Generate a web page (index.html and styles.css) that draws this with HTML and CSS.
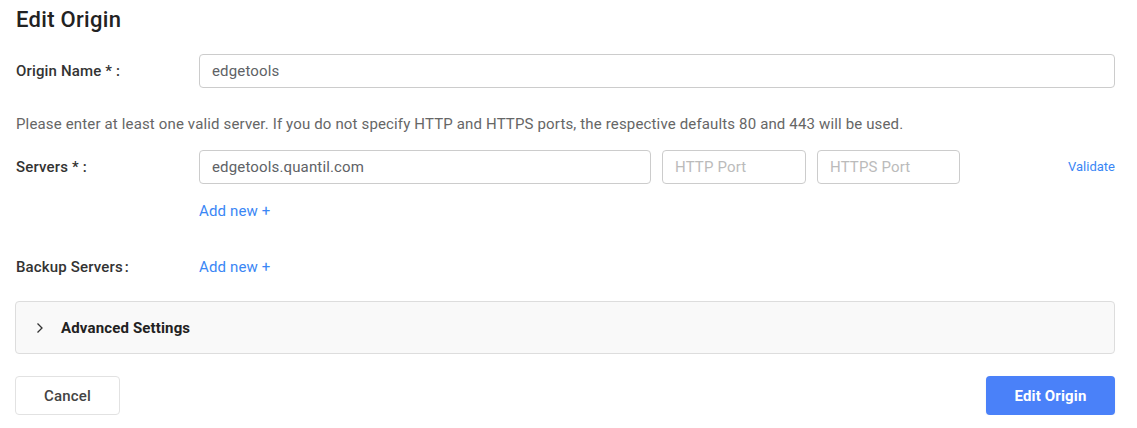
FILE: index.html
```html
<!DOCTYPE html>
<html>
<head>
<meta charset="utf-8">
<link rel="stylesheet" href="styles.css">
</head>
<body>
<div class="page">
  <h1 class="title">Edit Origin</h1>
  <div class="row row-name">
    <label class="label">Origin Name *<span class="colon">:</span></label>
    <div class="field"><div class="input">edgetools</div></div>
  </div>
  <p class="hint">Please enter at least one valid server. If you do not specify HTTP and HTTPS ports, the respective defaults 80 and 443 will be used.</p>
  <div class="row row-servers">
    <label class="label">Servers *<span class="colon">:</span></label>
    <div class="field">
      <div class="server-line">
        <div class="input host">edgetools.quantil.com</div>
        <div class="input port placeholder">HTTP Port</div>
        <div class="input port placeholder">HTTPS Port</div>
        <a class="validate">Validate</a>
      </div>
      <a class="add">Add new +</a>
    </div>
  </div>
  <div class="row row-backup">
    <label class="label">Backup Servers<span class="colon">:</span></label>
    <div class="field"><a class="add">Add new +</a></div>
  </div>
  <div class="panel">
    <svg class="chev" width="8" height="12" viewBox="0 0 8 12"><path d="M1.5 1.5 L6 6 L1.5 10.5" fill="none" stroke="#333" stroke-width="1.3"/></svg>
    <span class="panel-title">Advanced Settings</span>
  </div>
  <div class="actions">
    <button class="btn cancel">Cancel</button>
    <button class="btn primary">Edit Origin</button>
  </div>
</div>
</body>
</html>
```
FILE: styles.css
```css
* { box-sizing: border-box; }
body { margin: 0; background: #fff; font-family: Roboto, "Liberation Sans", sans-serif; color: #333; letter-spacing: 0.15px; }
.page { padding: 0 22px 0 15px; }
.title { margin: 0; padding: 7px 0 0 1px; font-size: 22px; font-weight: 500; line-height: 26px; color: #222; letter-spacing: 0.3px; }
.row { display: flex; align-items: flex-start; }
.label { width: 184px; flex: none; padding-left: 1px; font-size: 15px; font-weight: 500; line-height: 34px; color: #333; }
.colon { margin-left: 4px; }
.field { flex: 1; min-width: 0; }
.row-name { margin-top: 21px; }
.input { height: 34px; border: 1px solid #ccc; border-radius: 4px; padding: 0 12px; font-size: 15px; line-height: 32px; color: #606266; background: #fff; }
.placeholder { color: #bbb; }
.hint { margin: 20px 0 0 1px; font-size: 15px; line-height: 32px; color: #666; }
.row-servers { margin-top: 10px; }
.server-line { display: flex; align-items: center; }
.host { width: 452px; }
.port { width: 144px; margin-left: 11px; }
.port + .port { margin-left: 11px; width: 143px; }
.validate { margin-left: auto; font-size: 13px; color: #3a86f5; line-height: 34px; letter-spacing: 0; }
.add { display: block; font-size: 15px; color: #3a86f5; line-height: 20px; margin-top: 17px; }
.row-backup { margin-top: 36px; }
.row-backup .label { line-height: 20px; }
.row-backup .colon { margin-left: 2px; }
.row-backup .add { margin-top: 0; }
.panel { margin-top: 24px; height: 53px; border: 1px solid #ddd; border-radius: 4px; background: #f9f9f9; display: flex; align-items: center; padding-left: 20px; }
.chev { margin-right: 17px; }
.panel-title { font-size: 15px; font-weight: 700; color: #222; }
.actions { display: flex; justify-content: space-between; margin-top: 22px; }
.btn { font-family: inherit; font-size: 15px; letter-spacing: 0.15px; height: 39px; border-radius: 4px; cursor: pointer; }
.cancel { width: 105px; background: #fff; border: 1px solid #e2e2e2; color: #444; font-weight: 500; }
.primary { width: 129px; background: #4a81f9; border: none; color: #fff; font-weight: 700; box-shadow: 0 1px 2px rgba(0,0,0,0.08); }
```
